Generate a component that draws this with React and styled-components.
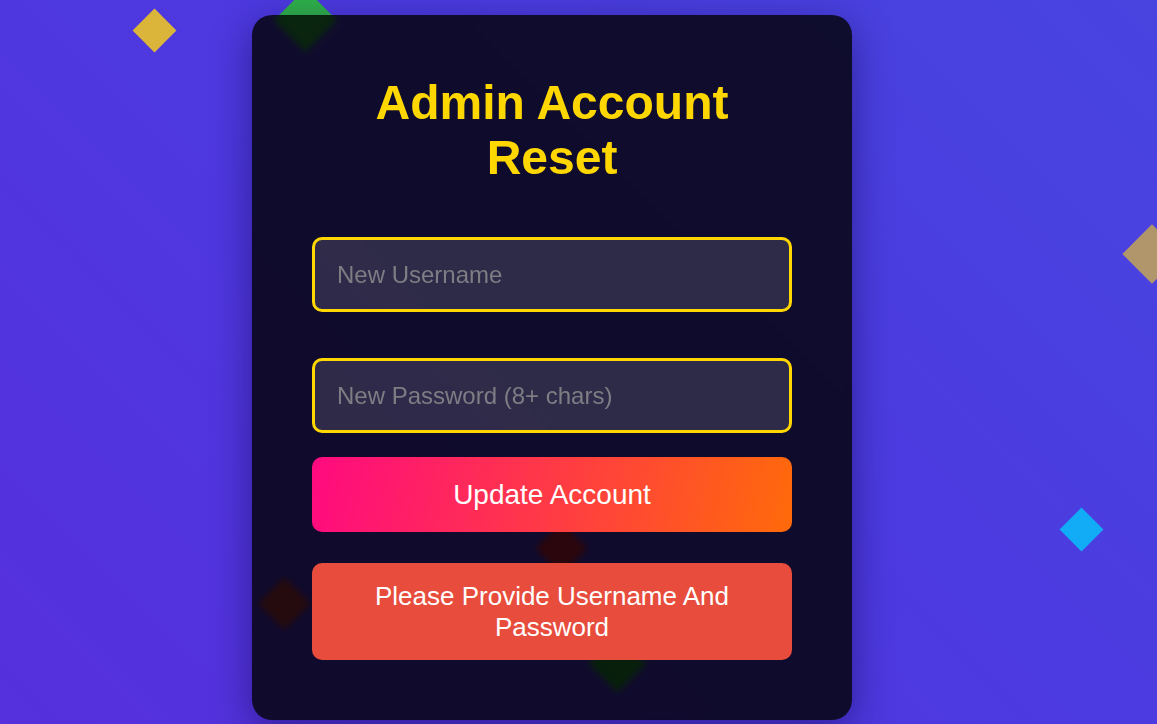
import React from "react";
import styled, { createGlobalStyle } from "styled-components";

const GlobalStyle = createGlobalStyle`
    * { box-sizing: border-box; }
    html, body {
        margin: 0;
        padding: 0;
        height: 100%;
        overflow: hidden;
    }
    body {
        font-family: "Liberation Sans", Arial, sans-serif;
        background: linear-gradient(45deg, #5530dc 0%, #4c3ae0 55%, #4844e0 100%);
    }
`;

const Page = styled.div`
    position: relative;
    width: 100%;
    height: 724px;
    padding: 15px 0 0 252px;
`;

const Diamond = styled.div`
    position: absolute;
    left: ${props => props.x}px;
    top: ${props => props.y}px;
    width: ${props => props.size}px;
    height: ${props => props.size}px;
    margin-left: ${props => -props.size / 2}px;
    margin-top: ${props => -props.size / 2}px;
    background: ${props => props.color};
    transform: rotate(45deg);
    z-index: 0;
`;

const Card = styled.div`
    position: relative;
    z-index: 1;
    width: 600px;
    height: 705px;
    padding: 60px;
    border-radius: 20px;
    background: rgba(0, 0, 0, 0.8);
    backdrop-filter: blur(3px);
    box-shadow: 0 10px 40px rgba(10, 5, 60, 0.45);
    display: flex;
    flex-direction: column;
`;

const Title = styled.h1`
    margin: 0 0 52px;
    color: #ffd700;
    font-size: 48px;
    font-weight: 700;
    text-align: center;
    line-height: 55px;
`;

const Field = styled.input`
    width: 100%;
    height: 75px;
    margin-bottom: ${props => props.gap}px;
    padding: 0 22px;
    border: 3px solid #ffd700;
    border-radius: 10px;
    background: rgba(255, 255, 255, 0.13);
    color: #fff;
    font-family: "Liberation Sans", Arial, sans-serif;
    font-size: 24px;
    outline: none;
    &::placeholder {
        color: #7f7d84;
    }
`;

const Button = styled.button`
    width: 100%;
    height: 75px;
    margin-bottom: 31px;
    border: none;
    border-radius: 10px;
    background: linear-gradient(100deg, #ff0a80 0%, #ff3a45 50%, #ff6a0a 100%);
    color: #fff;
    font-family: "Liberation Sans", Arial, sans-serif;
    font-size: 28px;
    cursor: pointer;
`;

const Warning = styled.div`
    height: 97px;
    padding: 0 40px;
    border-radius: 10px;
    background: #e74c3c;
    color: #fff;
    font-size: 26px;
    line-height: 31px;
    text-align: center;
    display: flex;
    align-items: center;
    justify-content: center;
`;

const diamonds = [
    { x: 154, y: 30, size: 31, color: "#dab53a" },
    { x: 305, y: 20, size: 45, color: "#2fb24a" },
    { x: 1152, y: 254, size: 42, color: "#b0966a" },
    { x: 1081, y: 529, size: 31, color: "#12abf6" },
    { x: 561, y: 548, size: 37, color: "#d81e3e" },
    { x: 284, y: 603, size: 37, color: "#b83a45" },
    { x: 617, y: 663, size: 41, color: "#2a9a3a" },
];

function App() {
    return (
        <>
            <GlobalStyle />
            <Page>
                {diamonds.map((d, i) => (
                    <Diamond key={i} x={d.x} y={d.y} size={d.size} color={d.color} />
                ))}
                <Card>
                    <Title>Admin Account Reset</Title>
                    <Field gap={46} type="text" placeholder="New Username" />
                    <Field gap={24} type="password" placeholder="New Password (8+ chars)" />
                    <Button>Update Account</Button>
                    <Warning>Please Provide Username And Password</Warning>
                </Card>
            </Page>
        </>
    );
}

export default App;
